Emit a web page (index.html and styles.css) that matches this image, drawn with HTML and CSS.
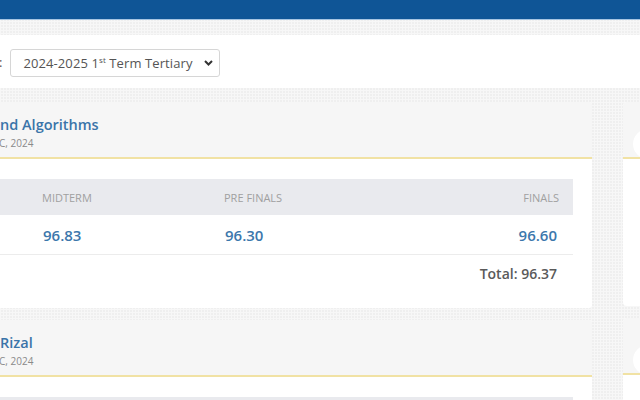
FILE: index.html
```html
<!DOCTYPE html>
<html>
<head>
<meta charset="utf-8">
<link rel="stylesheet" href="styles.css">
</head>
<body>
<div class="topbar"></div>
<div class="page">
  <div class="filter">
    <span class="filter-label">:</span>
    <div class="select">
      <span class="select-text">2024-2025 1<sup>st</sup> Term Tertiary</span>
      <svg class="chev" width="9" height="6" viewBox="0 0 9 6"><path d="M1 1 L4.5 4.5 L8 1" fill="none" stroke="#333" stroke-width="2"/></svg>
    </div>
  </div>
  <div class="main">
    <div class="col col-left">
      <div class="card">
        <div class="card-head">
          <div class="title">nd Algorithms</div>
          <div class="sub">C, 2024</div>
        </div>
        <div class="card-body">
          <div class="grid thead">
            <span>MIDTERM</span><span>PRE FINALS</span><span class="r">FINALS</span>
          </div>
          <div class="grid trow">
            <span>96.83</span><span>96.30</span><span class="r">96.60</span>
          </div>
          <div class="total">Total: 96.37</div>
        </div>
      </div>
      <div class="card">
        <div class="card-head">
          <div class="title">Rizal</div>
          <div class="sub">C, 2024</div>
        </div>
        <div class="card-body">
          <div class="grid thead"></div>
        </div>
      </div>
    </div>
    <div class="col col-right">
      <div class="card side">
        <div class="card-head side-head"><span class="dot"></span></div>
        <div class="side-body"></div>
      </div>
      <div class="card side">
        <div class="card-head side-head"><span class="dot"></span></div>
        <div class="side-body"></div>
      </div>
    </div>
  </div>
</div>
</body>
</html>
```

FILE: styles.css
```css
html, body {
  margin: 0;
  padding: 0;
}
body {
  width: 640px;
  height: 400px;
  overflow: hidden;
  font-family: "Open Sans", "Liberation Sans", sans-serif;
  background-color: #efefef;
  background-image:
    linear-gradient(#f7f7f7 1px, transparent 1px),
    linear-gradient(90deg, #f7f7f7 1px, transparent 1px);
  background-size: 3px 3px;
}
.topbar {
  height: 19px;
  background: #0f5596;
  border-bottom: 1px solid #a7c5e2;
}
.page {
  padding-top: 15px;
}
.filter {
  background: #fff;
  height: 53px;
  display: flex;
  align-items: center;
  gap: 8px;
}
.filter-label {
  font-size: 13px;
  color: #555;
  margin-left: -1px;
}
.select {
  width: 210px;
  height: 28px;
  border: 1px solid #d6d6d6;
  border-radius: 3px;
  display: flex;
  align-items: center;
  justify-content: space-between;
  padding: 0 6px 0 12px;
  box-sizing: border-box;
  margin-top: 2px;
}
.select-text {
  font-size: 13px;
  color: #555;
  white-space: nowrap;
  letter-spacing: 0.1px;
}
.select-text sup {
  font-size: 8px;
  vertical-align: 5px;
  line-height: 0;
}
.chev {
  display: block;
}
.main {
  display: flex;
  gap: 31px;
  margin-left: -20px;
  margin-top: 14px;
}
.col {
  display: flex;
  flex-direction: column;
  gap: 12px;
}
.col-left {
  width: 612px;
  flex: none;
}
.col-right {
  flex: 1;
}
.card {
  background: #fff;
  border-radius: 3px;
  overflow: hidden;
}
.card-head {
  background: #f6f6f6;
  padding: 12px 20px 5px 20px;
  border-bottom: 2px solid #f1e2a4;
  height: 38px;
}
.title {
  font-size: 14.5px;
  line-height: 22px;
  font-weight: 600;
  color: #3a74a9;
  white-space: nowrap;
}
.sub {
  font-size: 10px;
  line-height: 14px;
  color: #8a8a8a;
  margin-left: -1px;
}
.card-body {
  padding: 20px 19px 0 20px;
}
.grid {
  display: grid;
  grid-template-columns: 182px 1fr auto;
  align-items: center;
  padding: 0 14px 0 42px;
}
.thead {
  background: #e9eaee;
  height: 36px;
  font-size: 11px;
  color: #a0a0a0;
  text-transform: uppercase;
}
.trow {
  height: 39px;
  border-bottom: 1px solid #ececec;
  font-size: 15px;
  font-weight: 600;
  color: #3c77ac;
  padding-left: 43px;
  padding-right: 16px;
}
.r {
  text-align: right;
}
.total {
  font-size: 14px;
  font-weight: 600;
  color: #5a5a5a;
  text-align: right;
  line-height: 20px;
  padding: 9px 16px 24px 0;
}
.side {
  border-radius: 4px 0 0 4px;
}
.side-head {
  padding: 0;
  height: 55px;
  position: relative;
}
.dot {
  position: absolute;
  left: 10px;
  top: 27px;
  width: 30px;
  height: 30px;
  border-radius: 50%;
  background: #fff;
}
.side-body {
  height: 147px;
}
```
